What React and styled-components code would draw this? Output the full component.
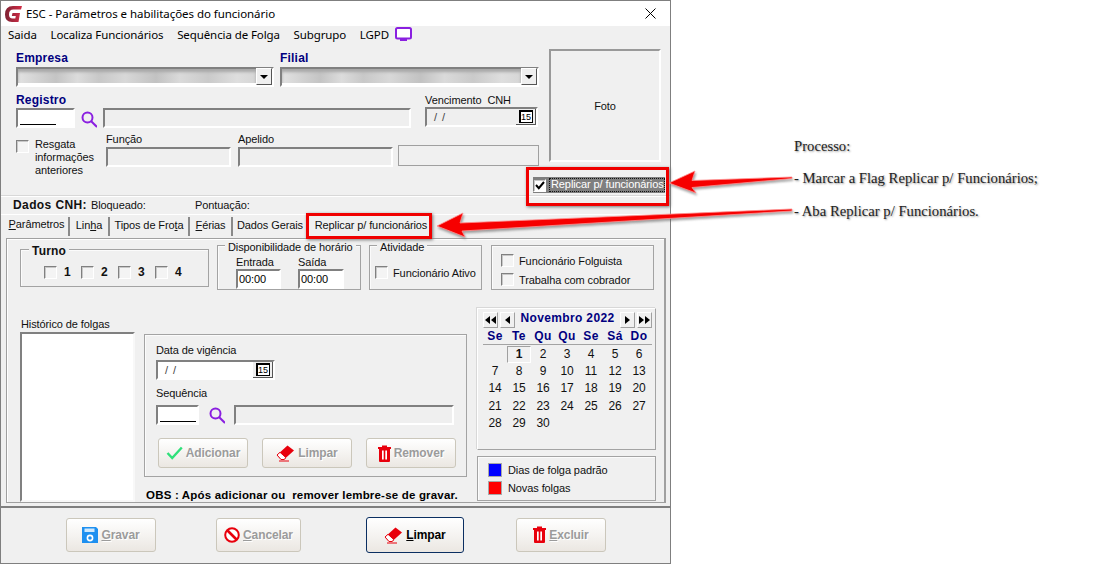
import styled, { createGlobalStyle } from "styled-components";

const Global = createGlobalStyle`
    html, body { margin: 0; padding: 0; background: #ffffff; }
    * { box-sizing: border-box; }
`

const Page = styled.div`
    position: relative;
    width: 1098px;
    height: 564px;
    overflow: hidden;
    background: #ffffff;
    font-family: "Liberation Sans", Arial, sans-serif;
    font-size: 11px;
    letter-spacing: -0.1px;
    color: #111111;
`

const Janela = styled.div`
    width: 671px;
    height: 564px;
    display: flex;
    flex-direction: column;
    background: #f0f0f0;
    border: 1px solid #7f7f7f;
    overflow: hidden;
`

const BarraTitulo = styled.div`
    height: 25px;
    flex: none;
    background: #ffffff;
    display: flex;
    align-items: center;
    padding: 0 14px 0 3px;
    font-family: "Noto Sans", sans-serif;
    font-size: 11.5px;
    color: #000000;
    gap: 3px;
`

const Titulo = styled.span`
    flex: 1;
    letter-spacing: -0.05px;
`

const Menu = styled.div`
    height: 20px;
    flex: none;
    display: flex;
    align-items: center;
    padding: 0 0 4px 7px;
    gap: 13.7px;
    font-family: "Noto Sans", sans-serif;
    font-size: 11.5px;
    color: #000000;
    letter-spacing: -0.1px;
`

const Topo = styled.div`
    flex: none;
    height: 150px;
    display: flex;
    padding: 4px 5px 0 15px;
`

const ColForm = styled.div`
    width: 524px;
    flex: none;
    display: flex;
    flex-direction: column;
`

const ColFoto = styled.div`
    width: 132px;
    margin: -1px 0 0 -7px;
    flex: none;
    display: flex;
    flex-direction: column;
    align-items: flex-start;
`

const Foto = styled.div`
    width: 112px;
    height: 113px;
    margin-left: 16px;
    display: flex;
    align-items: center;
    justify-content: center;
    border-style: solid;
    border-width: 2px;
    border-color: #999999 #ffffff #ffffff #999999;
`

const LinhaReplicar = styled.div`
    margin-top: 15px;
    width: 132px;
    height: 16px;
    display: flex;
    align-items: center;
    gap: 3px;
    background: #7f7f7f;
`

const RotuloFocado = styled.span`
    flex: 1;
    height: 14px;
    line-height: 13px;
    color: #ffffff;
    outline: 1px dotted #111111;
    outline-offset: -1px;
    padding-left: 2px;
    white-space: nowrap;
`

const Linha = styled.div`
    display: flex;
    gap: ${(p) => p.$gap ?? 6}px;
    margin-top: ${(p) => p.$top ?? 0}px;
    align-items: ${(p) => p.$align ?? "flex-start"};
`

const Campo = styled.div`
    width: ${(p) => p.$w}px;
    margin-left: ${(p) => p.$ml ?? 0}px;
    margin-top: ${(p) => p.$top ?? 0}px;
    margin-bottom: ${(p) => p.$bottom ?? 0}px;
    flex: none;
    display: flex;
    flex-direction: column;
`

const RotuloAzul = styled.label`
    font-weight: bold;
    font-size: 12px;
    line-height: 14px;
    color: #00007f;
    margin-bottom: ${(p) => p.$mb ?? 2}px;
    letter-spacing: 0.2px;
`

const Rotulo = styled.label`
    line-height: ${(p) => p.$lh ?? 14}px;
    white-space: pre;
    margin-left: ${(p) => p.$ml ?? 0}px;
    margin-bottom: ${(p) => p.$mb ?? 0}px;
`

const Afundado = styled.div`
    height: ${(p) => p.$h ?? 20}px;
    width: ${(p) => (p.$w ? p.$w + "px" : "auto")};
    flex: none;
    display: flex;
    align-items: center;
    border-style: solid;
    border-width: 2px;
    border-color: #808080 #ffffff #ffffff #808080;
    background: ${(p) => (p.$branco ? "#ffffff" : "#efefef")};
    position: relative;
`

const Borrao = styled.div`
    flex: 1;
    height: 100%;
    background: linear-gradient(90deg, #e2e2e2 0, #cfcfcf 10%, #c4c4c4 16%, #dcdcdc 25%, #c8c8c8 34%, #d8d8d8 45%, #c2c2c2 58%, #dadada 68%, #cacaca 80%, #dedede 92%, #d6d6d6 100%);
    border-bottom: 2px solid #ffffff;
    box-shadow: inset 0 3px 3px #a8a8a8;
`

const BotaoCombo = styled.div`
    width: 16px;
    height: 17px;
    flex: none;
    margin-top: -1px;
    display: flex;
    align-items: center;
    justify-content: center;
    background: #efefef;
    border-style: solid;
    border-width: 1px;
    border-color: #ffffff #555555 #555555 #ffffff;
`

const Triangulo = styled.div`
    width: 0;
    height: 0;
    border-left: 4px solid transparent;
    border-right: 4px solid transparent;
    border-top: 4px solid #000000;
`

const Mascara = styled.div`
    width: ${(p) => p.$w}px;
    height: 1px;
    background: #000000;
    margin: 12px 0 0 2px;
`

const BotaoData = styled.div`
    width: 20px;
    height: 16px;
    flex: none;
    margin-left: auto;
    display: flex;
    align-items: center;
    justify-content: center;
    background: #efefef;
    border-right: 1px solid #555555;
    border-bottom: 1px solid #555555;
`

const Dia15 = styled.span`
    width: 14px;
    height: 13px;
    border: 1px solid #000000;
    border-top-width: 2px;
    border-left-width: 2px;
    background: #ffffff;
    font-size: 9px;
    line-height: 10px;
    text-align: center;
    color: #000000;
`

const TextoData = styled.span`
    padding-left: 7px;
    color: #444444;
    word-spacing: 2px;
`

const CaixaPlana = styled.div`
    width: 141px;
    height: 21px;
    border: 1px solid #a0a0a0;
`

const Check = styled.span`
    width: 13px;
    height: 13px;
    flex: none;
    display: inline-flex;
    align-items: center;
    justify-content: center;
    border-style: solid;
    border-width: 1px;
    border-color: #808080 #ffffff #ffffff #808080;
    box-shadow: inset 1px 1px 0 #c8c8c8;
    background: ${(p) => (p.$branco ? "#ffffff" : "#f4f4f4")};
`

const TextoResgata = styled.div`
    width: 66px;
    line-height: 13px;
    margin-left: 6px;
    margin-top: -2px;
`

const LinhaCnh = styled.div`
    flex: none;
    height: 18px;
    display: flex;
    align-items: center;
    padding: 0 0 2px 12px;
    border-top: 1px solid #ffffff;
    box-shadow: 0 -1px 0 #d8d8d8;
`

const Negrito = styled.span`
    font-weight: bold;
    font-size: 12px;
    letter-spacing: 0.4px;
    width: 78px;
`

const TextoBloqueado = styled.span`
    width: 104px;
`

const Abas = styled.div`
    flex: none;
    height: 23px;
    display: flex;
    align-items: flex-start;
    padding: 2px 0 0 4px;
    border-top: 1px solid #ffffff;
`

const Aba = styled.div`
    width: ${(p) => p.$w}px;
    flex: none;
    height: 19px;
    line-height: ${(p) => (p.$ativa ? 15 : 17)}px;
    text-align: center;
    border-right: 2px solid #8a8a8a;
    white-space: nowrap;
    &:last-child { border-right: none; }
`

const Sublinha = styled.span`
    text-decoration: underline;
`

const Painel = styled.div`
    flex: none;
    height: 265px;
    margin: 1px 4px 0 5px;
    padding: 6px 0 0 13px;
    border-style: solid;
    border-width: 1px 2px 1px 1px;
    border-color: #a0a0a0;
    box-shadow: inset 1px 1px 0 #ffffff;
    overflow: hidden;
`

const Grupos = styled.div`
    display: flex;
    gap: 8px;
    align-items: flex-start;
`

const Grupo = styled.div`
    position: relative;
    width: ${(p) => p.$w}px;
    height: ${(p) => p.$h}px;
    margin-top: ${(p) => p.$top ?? 0}px;
    margin-left: ${(p) => p.$ml ?? 0}px;
    padding: ${(p) => p.$pad ?? "0"};
    flex: none;
    border: 1px solid #a3a3a3;
    box-shadow: inset 1px 1px 0 #fbfbfb;
`

const Legenda = styled.span`
    position: absolute;
    top: -6px;
    left: ${(p) => p.$left ?? 8}px;
    padding: 0 3px;
    line-height: 14px;
    background: #f0f0f0;
    white-space: nowrap;
    font-weight: ${(p) => (p.$forte ? "bold" : "normal")};
    font-size: ${(p) => (p.$forte ? "12px" : "11px")};
    letter-spacing: ${(p) => (p.$forte ? "0.2px" : "-0.1px")};
`

const ItensTurno = styled.div`
    display: flex;
    margin: 15px 0 0 23px;
`

const ItemTurno = styled.div`
    width: 37px;
    display: flex;
    align-items: center;
    gap: 7px;
    font-weight: bold;
    font-size: 12px;
`

const Horarios = styled.div`
    display: flex;
    gap: 17px;
    padding: 9px 0 0 18px;
`

const Hora = styled.div`
    width: ${(p) => p.$w}px;
    height: 20px;
    border-style: solid;
    border-width: 2px;
    border-color: #808080 #ffffff #ffffff #808080;
    background: #ffffff;
    line-height: 17px;
    padding-left: 1px;
    color: #000000;
`

const ItemCheck = styled.div`
    display: flex;
    align-items: center;
    gap: ${(p) => p.$gap ?? 5}px;
    margin-top: ${(p) => p.$top ?? 0}px;
    margin-left: ${(p) => p.$ml ?? 0}px;
    white-space: nowrap;
`

const Inferior = styled.div`
    display: flex;
    margin-top: 18px;
`

const ColHistorico = styled.div`
    width: 115px;
    flex: none;
    padding-top: 9px;
    display: flex;
    flex-direction: column;
`

const Lista = styled.div`
    height: 170px;
    margin-top: 1px;
    background: #ffffff;
    border-style: solid;
    border-width: 2px;
    border-color: #808080 #f8f8f8 #f8f8f8 #808080;
`

const ColVigencia = styled.div`
    width: 323px;
    flex: none;
    margin-left: 9px;
    padding-top: 26px;
`

const Acoes = styled.div`
    display: flex;
    justify-content: space-between;
    padding-right: 10px;
    margin-top: 13px;
    margin-left: 2px;
`

const Botao = styled.div`
    width: ${(p) => p.$w}px;
    height: ${(p) => p.$h ?? 30}px;
    margin-left: ${(p) => p.$ml ?? 0}px;
    flex: none;
    display: flex;
    align-items: center;
    justify-content: center;
    gap: 3px;
    border-radius: 3px;
    border: 1px solid ${(p) => (p.$ativo ? "#0b2f62" : "#cbc7bb")};
    background: linear-gradient(#ffffff, #f3f1ee 60%, #ebe7e2);
    font-weight: bold;
    font-size: 12px;
    color: ${(p) => (p.$ativo ? "#000000" : "#9b9b9b")};
    text-shadow: ${(p) => (p.$ativo ? "none" : "1px 1px 0 #ffffff")};
`

const Obs = styled.div`
    margin: 11px 0 0 2px;
    font-weight: bold;
    font-size: 11.5px;
    line-height: 14px;
    letter-spacing: 0.19px;
    color: #000000;
    white-space: pre;
`

const ColCalendario = styled.div`
    width: 179px;
    flex: none;
    margin-left: 10px;
`

const Calendario = styled.div`
    height: 142px;
    padding: 2px 3px 0 5px;
    border-top: 1px solid #ffffff;
    border-left: 1px solid #ffffff;
    border-bottom: 1px solid #a3a3a3;
    border-right: 1px solid #a3a3a3;
    box-shadow: -1px -1px 0 #d8d8d8;
`

const NavCal = styled.div`
    display: flex;
    align-items: center;
    gap: 2px;
    height: 17px;
`

const BotaoNav = styled.div`
    width: 15px;
    height: 16px;
    display: flex;
    align-items: center;
    justify-content: center;
    border-style: solid;
    border-width: 1px;
    border-color: #ffffff #a0a0a0 #a0a0a0 #ffffff;
`

const MesAno = styled.div`
    flex: 1;
    text-align: center;
    color: #00007f;
    font-weight: bold;
    font-size: 12px;
    line-height: 14px;
    margin-top: -3px;
    letter-spacing: 0.35px;
`

const GradeDias = styled.div`
    display: grid;
    grid-template-columns: repeat(7, 24px);
    grid-auto-rows: 17.2px;
    justify-items: center;
    align-items: center;
`

const CabecalhoDias = styled.div`
    display: grid;
    grid-template-columns: repeat(7, 24px);
    justify-items: center;
    height: 17px;
    line-height: 16px;
    color: #00007f;
    font-weight: bold;
    font-size: 12px;
    letter-spacing: 0.4px;
    border-bottom: 1px solid #a3a3a3;
    margin-bottom: 1px;
`

const Dia = styled.div`
    width: 24px;
    height: 17px;
    line-height: 15px;
    text-align: center;
    font-size: 12px;
    color: #111111;
    font-weight: ${(p) => (p.$hoje ? "bold" : "normal")};
    border: 1px solid ${(p) => (p.$hoje ? "#a0a0a0" : "transparent")};
    border-right-color: ${(p) => (p.$hoje ? "#ffffff" : "transparent")};
    border-bottom-color: ${(p) => (p.$hoje ? "#ffffff" : "transparent")};
`

const Cor = styled.span`
    width: 14px;
    height: 14px;
    flex: none;
    background: ${(p) => p.$cor};
    border: 1px solid #ffffff;
    outline: 1px solid #a8a8a8;
    outline-offset: -1px;
`

const Rodape = styled.div`
    flex: none;
    height: 55px;
    margin-top: 3px;
    display: flex;
    align-items: center;
    padding-left: 65px;
    border-top: 2px solid #7f7f7f;
`

const Nota = styled.div`
    position: absolute;
    left: ${(p) => p.$x}px;
    top: ${(p) => p.$y}px;
    font-family: "Liberation Serif", serif;
    font-size: 14.7px;
    letter-spacing: 0;
    line-height: 16px;
    color: #222222;
    white-space: nowrap;
    text-shadow: 1px 1px 2px #9a9a9a;
`

const CaixaVermelha = styled.div`
    position: absolute;
    left: ${(p) => p.$x}px;
    top: ${(p) => p.$y}px;
    width: ${(p) => p.$w}px;
    height: ${(p) => p.$h}px;
    border: 3px solid #f00000;
    box-shadow: 1px 1px 3px #777777;
`

const Setas = styled.svg`
    position: absolute;
    left: 0;
    top: 0;
    filter: drop-shadow(1px 2px 1px rgba(90, 90, 90, 0.55));
`

function Logo() {
    return (
        <svg width="19" height="18" viewBox="0 0 19 18">
            <defs>
                <linearGradient id="logoEsc" x1="0" x2="1" y1="0" y2="0">
                    <stop offset="0" stopColor="#7d2233" />
                    <stop offset="1" stopColor="#d42c46" />
                </linearGradient>
            </defs>
            <path d="M18 1 H9 Q1 1 1 9.5 Q1 17 8 17 H14.5 L16 8 H8.5 L7.8 11 H11.8 L11.3 13.5 H8.5 Q5 13.5 5 9.5 Q5 4.5 9.5 4.5 H17 Z" fill="url(#logoEsc)" />
        </svg>
    );
}

function Tela() {
    return (
        <svg width="18" height="15" viewBox="0 0 18 15">
            <rect x="1" y="1" width="15" height="10.5" rx="1.5" fill="#ffffff" stroke="#8a1fe0" strokeWidth="2" />
            <rect x="5" y="12" width="7" height="2" fill="#8a1fe0" />
        </svg>
    );
}

function Lupa() {
    return (
        <svg width="16" height="17" viewBox="0 0 16 17">
            <circle cx="6.5" cy="6.5" r="5" fill="none" stroke="#8a1fe0" strokeWidth="2" />
            <path d="M10.2 10.2 L16 16" stroke="#8a1fe0" strokeWidth="2" />
        </svg>
    );
}

function Visto() {
    return (
        <svg width="17" height="14" viewBox="0 0 17 14">
            <path d="M1.5 7 L6.2 12 L15.8 1.5" fill="none" stroke="#2fe07a" strokeWidth="2.4" />
        </svg>
    );
}

function Borracha() {
    return (
        <svg width="19" height="18" viewBox="0 0 19 18">
            <path d="M1 11 L11.5 1.5 L18 6.5 L8 15.5 H5 Z" fill="#e8000c" />
            <path d="M1 11 L5 15.5 H8 L10 13.7 L4 8.3 Z" fill="#ffffff" stroke="#e8000c" strokeWidth="1" />
            <path d="M3 17 H13" stroke="#e8000c" strokeWidth="1" />
        </svg>
    );
}

function Lixeira() {
    return (
        <svg width="13" height="17" viewBox="0 0 13 17">
            <path d="M0 2 H4 V0.5 H9 V2 H13 V4 H12 V16 Q12 17 11 17 H2 Q1 17 1 16 V4 H0 Z" fill="#e8000c" />
            <rect x="4" y="5.5" width="1.7" height="9" fill="#ffffff" />
            <rect x="7.3" y="5.5" width="1.7" height="9" fill="#ffffff" />
        </svg>
    );
}

function Disquete() {
    return (
        <svg width="16" height="16" viewBox="0 0 16 16">
            <path d="M0 0 H14 L16 2 V16 H0 Z" fill="#1e90f0" />
            <rect x="2.5" y="1.5" width="10" height="3.5" fill="#cfe8fc" />
            <circle cx="8" cy="11" r="2.6" fill="none" stroke="#ffffff" strokeWidth="1.6" />
        </svg>
    );
}

function Proibido() {
    return (
        <svg width="16" height="16" viewBox="0 0 16 16">
            <circle cx="8" cy="8" r="6.8" fill="#ffffff" stroke="#e8000c" strokeWidth="2" />
            <path d="M3 3 L13 13" stroke="#e8000c" strokeWidth="2.6" />
        </svg>
    );
}

function VistoCheck() {
    return (
        <svg width="10" height="9" viewBox="0 0 10 9">
            <path d="M1 4 L3.8 7.2 L9 1" fill="none" stroke="#000000" strokeWidth="2" />
        </svg>
    );
}

function Nav({ dupla, dir }) {
    const pontas = dir ? "M1 1 L6 5 L1 9 Z" : "M6 1 L1 5 L6 9 Z";
    return (
        <BotaoNav>
            <svg width={dupla ? 13 : 7} height="10" viewBox={dupla ? "0 0 13 10" : "0 0 7 10"}>
                <path d={pontas} fill="#000000" />
                {dupla && <path d={pontas} transform="translate(6 0)" fill="#000000" />}
            </svg>
        </BotaoNav>
    );
}

function CampoData({ largura }) {
    return (
        <Afundado $w={largura} $branco={largura > 115}>
            <TextoData>/ /</TextoData>
            <BotaoData><Dia15>15</Dia15></BotaoData>
        </Afundado>
    );
}

const dias = Array.from({ length: 30 }, (_, i) => i + 1);

export default function App() {
    return (
        <Page>
            <Global />
            <Janela>
                <BarraTitulo>
                    <Logo />
                    <Titulo>ESC - Parâmetros e habilitações do funcionário</Titulo>
                    <svg width="11" height="11" viewBox="0 0 11 11">
                        <path d="M0.5 0.5 L10.5 10.5 M10.5 0.5 L0.5 10.5" stroke="#000000" strokeWidth="1" />
                    </svg>
                </BarraTitulo>
                <Menu>
                    <span>Saida</span>
                    <span>Localiza Funcionários</span>
                    <span>Sequência de Folga</span>
                    <span>Subgrupo</span>
                    <Linha $gap={6} $align="center">
                        <span>LGPD</span>
                        <Tela />
                    </Linha>
                </Menu>
                <Topo>
                    <ColForm>
                        <Linha $gap={6} $top={1}>
                            <Campo $w={258}>
                                <RotuloAzul>Empresa</RotuloAzul>
                                <Afundado>
                                    <Borrao />
                                    <BotaoCombo><Triangulo /></BotaoCombo>
                                </Afundado>
                            </Campo>
                            <Campo $w={259}>
                                <RotuloAzul>Filial</RotuloAzul>
                                <Afundado>
                                    <Borrao />
                                    <BotaoCombo><Triangulo /></BotaoCombo>
                                </Afundado>
                            </Campo>
                        </Linha>
                        <Linha $gap={6} $top={6} $align="flex-end">
                            <Campo $w={59}>
                                <RotuloAzul $mb={1}>Registro</RotuloAzul>
                                <Afundado $branco><Mascara $w={36} /></Afundado>
                            </Campo>
                            <Lupa />
                            <Afundado $w={308} />
                            <Campo $w={113} $ml={8} $bottom={1}>
                                <Rotulo $lh={13}>{"Vencimento  CNH"}</Rotulo>
                                <CampoData largura={113} />
                            </Campo>
                        </Linha>
                        <Linha $gap={0} $top={12}>
                            <Check />
                            <TextoResgata>Resgata informações anteriores</TextoResgata>
                            <Campo $w={125} $ml={5} $top={-8}>
                                <Rotulo $mb={1}>Função</Rotulo>
                                <Afundado />
                            </Campo>
                            <Campo $w={155} $ml={7} $top={-8}>
                                <Rotulo $mb={1}>Apelido</Rotulo>
                                <Afundado />
                            </Campo>
                            <Campo $w={141} $ml={5} $top={5}>
                                <CaixaPlana />
                            </Campo>
                        </Linha>
                    </ColForm>
                    <ColFoto>
                        <Foto>Foto</Foto>
                        <LinhaReplicar>
                            <Check $branco><VistoCheck /></Check>
                            <RotuloFocado>Replicar p/ funcionários</RotuloFocado>
                        </LinhaReplicar>
                    </ColFoto>
                </Topo>
                <LinhaCnh>
                    <Negrito>Dados CNH:</Negrito>
                    <TextoBloqueado>Bloqueado:</TextoBloqueado>
                    <span>Pontuação:</span>
                </LinhaCnh>
                <Abas>
                    <Aba $w={65} $ativa><Sublinha>P</Sublinha>arâmetros</Aba>
                    <Aba $w={40}>Lin<Sublinha>h</Sublinha>a</Aba>
                    <Aba $w={80}>Tipos de Fro<Sublinha>t</Sublinha>a</Aba>
                    <Aba $w={43}><Sublinha>F</Sublinha>érias</Aba>
                    <Aba $w={76}>Dados Gerais</Aba>
                    <Aba $w={124}>Replicar p/ funcionários</Aba>
                </Abas>
                <Painel>
                    <Grupos>
                        <Grupo $w={189} $h={38} $top={4}>
                            <Legenda $forte>Turno</Legenda>
                            <ItensTurno>
                                <ItemTurno><Check />1</ItemTurno>
                                <ItemTurno><Check />2</ItemTurno>
                                <ItemTurno><Check />3</ItemTurno>
                                <ItemTurno><Check />4</ItemTurno>
                            </ItensTurno>
                        </Grupo>
                        <Grupo $w={144} $h={45}>
                            <Legenda $left={7}>Disponibilidade de horário</Legenda>
                            <Horarios>
                                <Campo $w={45}>
                                    <Rotulo>Entrada</Rotulo>
                                    <Hora $w={45}>00:00</Hora>
                                </Campo>
                                <Campo $w={46}>
                                    <Rotulo>Saída</Rotulo>
                                    <Hora $w={46}>00:00</Hora>
                                </Campo>
                            </Horarios>
                        </Grupo>
                        <Grupo $w={113} $h={45}>
                            <Legenda $left={7}>Atividade</Legenda>
                            <ItemCheck $top={20} $ml={5}><Check />Funcionário Ativo</ItemCheck>
                        </Grupo>
                        <Grupo $w={163} $h={45} $ml={1}>
                            <ItemCheck $top={8} $ml={9}><Check />Funcionário Folguista</ItemCheck>
                            <ItemCheck $top={6} $ml={9}><Check />Trabalha com cobrador</ItemCheck>
                        </Grupo>
                    </Grupos>
                    <Inferior>
                        <ColHistorico>
                            <Rotulo $ml={1}>Histórico de folgas</Rotulo>
                            <Lista />
                        </ColHistorico>
                        <ColVigencia>
                            <Grupo $w={323} $h={143} $pad="8px 0 0 11px">
                                <Rotulo>Data de vigência</Rotulo>
                                <Linha $top={3}><CampoData largura={119} /></Linha>
                                <Linha $top={6}><Rotulo>Sequência</Rotulo></Linha>
                                <Linha $top={5} $gap={9.5} $align="center">
                                    <Afundado $w={43} $branco><Mascara $w={36} /></Afundado>
                                    <Lupa />
                                    <Afundado $w={220} />
                                </Linha>
                                <Acoes>
                                    <Botao $w={90}><Visto />Adicionar</Botao>
                                    <Botao $w={90}><Borracha />Limpar</Botao>
                                    <Botao $w={90}><Lixeira />Remover</Botao>
                                </Acoes>
                            </Grupo>
                            <Obs>{"OBS : Após adicionar ou  remover lembre-se de gravar."}</Obs>
                        </ColVigencia>
                        <ColCalendario>
                            <Calendario>
                                <NavCal>
                                    <Nav dupla />
                                    <Nav />
                                    <MesAno>Novembro 2022</MesAno>
                                    <Nav dir />
                                    <Nav dupla dir />
                                </NavCal>
                                <CabecalhoDias>
                                    <span>Se</span><span>Te</span><span>Qu</span><span>Qu</span><span>Se</span><span>Sá</span><span>Do</span>
                                </CabecalhoDias>
                                <GradeDias>
                                    <span />
                                    {dias.map((d) => <Dia key={d} $hoje={d === 1}>{d}</Dia>)}
                                </GradeDias>
                            </Calendario>
                            <Grupo $w={179} $h={45} $top={6} $pad="6px 0 0 10px">
                                <ItemCheck $gap={6}><Cor $cor="#0000ff" />Dias de folga padrão</ItemCheck>
                                <ItemCheck $gap={6} $top={4}><Cor $cor="#ff0000" />Novas folgas</ItemCheck>
                            </Grupo>
                        </ColCalendario>
                    </Inferior>
                </Painel>
                <Rodape>
                    <Botao $w={90} $h={34}><Disquete /><span><Sublinha>G</Sublinha>ravar</span></Botao>
                    <Botao $w={85} $h={34} $ml={60}><Proibido /><span><Sublinha>C</Sublinha>ancelar</span></Botao>
                    <Botao $w={98} $h={36} $ml={65} $ativo><Borracha /><span><Sublinha>L</Sublinha>impar</span></Botao>
                    <Botao $w={90} $h={34} $ml={52}><Lixeira /><span><Sublinha>E</Sublinha>xcluir</span></Botao>
                </Rodape>
            </Janela>

            <CaixaVermelha $x={526} $y={167} $w={143} $h={39} />
            <CaixaVermelha $x={306} $y={213} $w={126} $h={26} />
            <Setas width="1098" height="564">
                <path d="M792 177 L692 180.5 L695 171 L669 183 L696 193 L692 187.5 L792 178.5 Z" fill="#f60000" stroke="#ff8f8f" strokeWidth="0.8" />
                <path d="M792 209 L460 223 L463 213 L437 226 L465 237 L462 231 L792 211 Z" fill="#f60000" stroke="#ff8f8f" strokeWidth="0.8" />
            </Setas>
            <Nota $x={794} $y={138}>Processo:</Nota>
            <Nota $x={794} $y={170}>- Marcar a Flag Replicar p/ Funcionários;</Nota>
            <Nota $x={794} $y={203}>- Aba Replicar p/ Funcionários.</Nota>
        </Page>
    );
}
